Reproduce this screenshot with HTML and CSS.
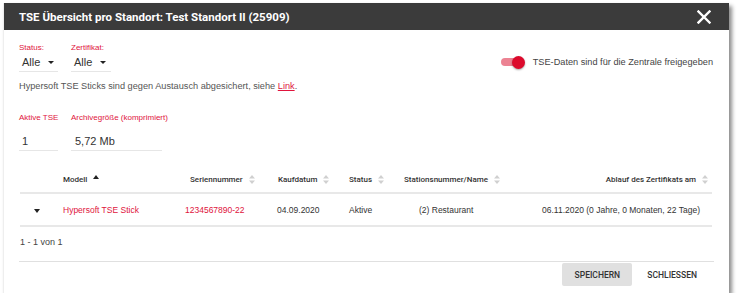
FILE: index.html
```html
<!DOCTYPE html>
<html lang="de">
<head>
    <meta charset="UTF-8">
    <title>TSE Übersicht</title>
    <link rel="stylesheet" href="styles.css">
</head>
<body>

<div class="dialog">
    <div class="dialog-header">
        <h2>TSE Übersicht pro Standort: Test Standort II (25909)</h2>
        <svg class="close" width="14" height="14" viewBox="0 0 14 14">
            <path d="M1.5 1.5 L12.5 12.5 M12.5 1.5 L1.5 12.5" stroke="#fff" stroke-width="2.4" stroke-linecap="square"/>
        </svg>
    </div>

    <div class="dialog-body">
        <div class="top-row">
            <div class="filters">
                <div class="field field-status">
                    <label>Status:</label>
                    <div class="select">Alle <span class="caret"></span></div>
                </div>
                <div class="field field-cert">
                    <label>Zertifikat:</label>
                    <div class="select">Alle <span class="caret"></span></div>
                </div>
            </div>
            <div class="toggle-wrap">
                <span class="toggle"><span class="thumb"></span></span>
                <span class="toggle-text">TSE-Daten sind für die Zentrale freigegeben</span>
            </div>
        </div>

        <p class="info">Hypersoft TSE Sticks sind gegen Austausch abgesichert, siehe <a href="#">Link</a>.</p>

        <div class="stats">
            <div class="field field-status">
                <label>Aktive TSE</label>
                <div class="value">1</div>
            </div>
            <div class="field field-size">
                <label>Archivegröße (komprimiert)</label>
                <div class="value">5,72 Mb</div>
            </div>
        </div>

        <table class="tse-table">
            <colgroup>
                <col style="width:43px">
                <col style="width:122px">
                <col style="width:92px">
                <col style="width:72px">
                <col style="width:55px">
                <col style="width:130px">
                <col>
            </colgroup>
            <thead>
                <tr>
                    <th></th>
                    <th>Modell <svg class="sort" width="6" height="9" viewBox="0 0 6 9"><path d="M0 4 L3 0 L6 4 Z" fill="#222"/></svg></th>
                    <th class="th-serial">Seriennummer <svg class="sort" width="6" height="9" viewBox="0 0 6 9"><path d="M0 3.5 L3 0 L6 3.5 Z M0 5.5 L3 9 L6 5.5 Z" fill="#d0d0d0"/></svg></th>
                    <th class="th-date">Kaufdatum <svg class="sort" width="6" height="9" viewBox="0 0 6 9"><path d="M0 3.5 L3 0 L6 3.5 Z M0 5.5 L3 9 L6 5.5 Z" fill="#d0d0d0"/></svg></th>
                    <th>Status <svg class="sort" width="6" height="9" viewBox="0 0 6 9"><path d="M0 3.5 L3 0 L6 3.5 Z M0 5.5 L3 9 L6 5.5 Z" fill="#d0d0d0"/></svg></th>
                    <th>Stationsnummer/Name <svg class="sort" width="6" height="9" viewBox="0 0 6 9"><path d="M0 3.5 L3 0 L6 3.5 Z M0 5.5 L3 9 L6 5.5 Z" fill="#d0d0d0"/></svg></th>
                    <th class="th-right">Ablauf des Zertifikats am <svg class="sort" width="6" height="9" viewBox="0 0 6 9"><path d="M0 3.5 L3 0 L6 3.5 Z M0 5.5 L3 9 L6 5.5 Z" fill="#d0d0d0"/></svg></th>
                </tr>
            </thead>
            <tbody>
                <tr>
                    <td class="td-caret"><span class="caret"></span></td>
                    <td class="red">Hypersoft TSE Stick</td>
                    <td class="red">1234567890-22</td>
                    <td>04.09.2020</td>
                    <td>Aktive</td>
                    <td class="td-station">(2) Restaurant</td>
                    <td class="td-right">06.11.2020 (0 Jahre, 0 Monaten, 22 Tage)</td>
                </tr>
            </tbody>
        </table>

        <div class="pager">1 - 1 von 1</div>

        <div class="dialog-actions">
            <button class="btn btn-save">SPEICHERN</button>
            <button class="btn">SCHLIESSEN</button>
        </div>
    </div>
</div>

</body>
</html>
```

FILE: styles.css
```css
body {
    margin: 0;
    background-color: #ffffff;
    font-family: "Liberation Sans", Arial, sans-serif;
    color: #333;
}
.dialog {
    width: 726px;
    height: 290px;
    margin: 3px 0 0 3px;
    background-color: #fff;
    border-left: 1px solid #eee;
    box-sizing: border-box;
    box-shadow: 3px 3px 4px rgba(0, 0, 0, 0.45);
}
.dialog-header {
    height: 27px;
    background-color: #3b3b3b;
    display: flex;
    align-items: center;
    justify-content: space-between;
    padding: 0 18px 0 15px;
}
.dialog-header h2 {
    margin: 0;
    font-family: Roboto, sans-serif;
    font-size: 11.5px;
    font-weight: 700;
    color: #fff;
}
.dialog-body {
    padding: 0 15px 0 15px;
}
.top-row {
    display: flex;
    justify-content: space-between;
    padding-top: 13px;
}
.filters, .stats {
    display: flex;
    gap: 13px;
}
.field label {
    display: block;
    font-size: 8px;
    line-height: 10px;
    color: #e0143c;
    white-space: nowrap;
}
.field-status { width: 39px; }
.field-cert { width: 40px; }
.field-size { width: 91px; }
.select {
    height: 18px;
    line-height: 19px;
    font-size: 11px;
    color: #333;
    padding-left: 3px;
    border-bottom: 1px solid #e6e6e6;
    display: flex;
    align-items: center;
}
.caret {
    display: inline-block;
    width: 0;
    height: 0;
    border-left: 3.5px solid transparent;
    border-right: 3.5px solid transparent;
    border-top: 3.5px solid #222;
    margin-left: 8px;
}
.toggle-wrap {
    display: flex;
    align-items: center;
    margin-top: 9px;
    margin-right: 1px;
}
.toggle {
    position: relative;
    width: 20px;
    height: 8px;
    border-radius: 4px;
    background-color: #ec8393;
    margin-right: 12px;
}
.toggle .thumb {
    position: absolute;
    right: -4px;
    top: -2.5px;
    width: 13px;
    height: 13px;
    border-radius: 50%;
    background-color: #dc0a2c;
    box-shadow: 0 1px 2px rgba(0, 0, 0, 0.35);
}
.toggle-text {
    font-size: 9.2px;
    color: #444;
}
.info {
    margin: 9px 0 0 0;
    font-size: 9.2px;
    line-height: 10px;
    color: #555;
}
.info a {
    color: #e0143c;
}
.stats {
    margin-top: 22px;
}
.value {
    margin-top: 7px;
    height: 20px;
    line-height: 22px;
    font-size: 11px;
    padding-left: 3px;
    border-bottom: 1px solid #e6e6e6;
}
.field-size .value {
    padding-left: 4px;
}
.tse-table {
    width: 692px;
    margin: 16px 1px 0 1px;
    border-collapse: collapse;
    table-layout: fixed;
}
.tse-table th {
    height: 25px;
    font-family: Roboto, sans-serif;
    font-size: 8px;
    font-weight: 500;
    color: #333;
    text-align: left;
    padding: 0;
    border-bottom: 2px solid #e8e8e8;
    white-space: nowrap;
}
.tse-table td {
    height: 31px;
    font-size: 8.5px;
    color: #333;
    padding: 0;
    border-bottom: 2px solid #e8e8e8;
    white-space: nowrap;
}
.tse-table .red {
    color: #e0143c;
}
.th-serial { padding-left: 5px !important; }
.th-date { padding-left: 1px !important; }
.th-right { text-align: right !important; padding-right: 4px !important; }
.td-right { text-align: right; padding-right: 12px !important; }
.td-station { padding-left: 15px !important; }
.td-caret { padding-left: 14px !important; }
.td-caret .caret { margin-left: 0; border-top-width: 4px; }
.sort {
    vertical-align: middle;
    margin-left: 4px;
}
.pager {
    height: 34px;
    line-height: 30px;
    font-size: 9px;
    padding-left: 1px;
    color: #444;
    border-bottom: 1px solid #e0e0e0;
}
.dialog-actions {
    display: flex;
    justify-content: flex-end;
    gap: 5px;
    padding: 1px 7px 0 0;
}
.btn {
    height: 23px;
    padding: 0 10px;
    border: none;
    border-radius: 2px;
    background: transparent;
    font-family: Roboto, sans-serif;
    font-size: 8.5px;
    font-weight: 500;
    color: #333;
}
.btn-save {
    width: 70px;
    background-color: #e0e0e0;
}
```
